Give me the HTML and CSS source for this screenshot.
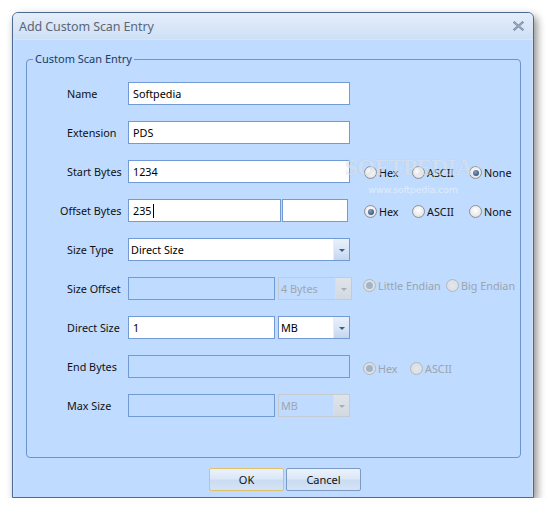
FILE: index.html
```html
<!DOCTYPE html>
<html>
<head>
<meta charset="utf-8">
<link rel="stylesheet" href="styles.css">
</head>
<body>
<div class="window">
  <div class="titlebar">
    <span class="title">Add Custom Scan Entry</span>
    <svg class="close" width="11" height="10" viewBox="0 0 11 10">
      <path d="M1.5 1.5 L9.5 8.5 M9.5 1.5 L1.5 8.5" stroke="#7a8ba5" stroke-width="2.2" stroke-linecap="square"/>
      <path d="M1.5 1.5 L9.5 8.5 M9.5 1.5 L1.5 8.5" stroke="#a9b8cc" stroke-width="0.8"/>
    </svg>
  </div>
  <div class="body">
    <fieldset class="group">
      <legend>Custom Scan Entry</legend>
      <div class="form">
        <div class="lbl">Name</div>
        <div class="field"><div class="tb w-full">Softpedia</div></div>
        <div></div>

        <div class="lbl">Extension</div>
        <div class="field"><div class="tb w-full">PDS</div></div>
        <div></div>

        <div class="lbl">Start Bytes</div>
        <div class="field"><div class="tb w-full">1234</div></div>
        <div class="radios low">
          <label class="opt o-hex"><span class="rb"></span>Hex</label>
          <label class="opt o-ascii"><span class="rb"></span>ASCII</label>
          <label class="opt"><span class="rb on"></span>None</label>
        </div>

        <div class="lbl wide">Offset Bytes</div>
        <div class="field gap1"><div class="tb w-offset">235<span class="caret"></span></div><div class="tb w-small"></div></div>
        <div class="radios low">
          <label class="opt o-hex"><span class="rb on"></span>Hex</label>
          <label class="opt o-ascii"><span class="rb"></span>ASCII</label>
          <label class="opt"><span class="rb"></span>None</label>
        </div>

        <div class="lbl">Size Type</div>
        <div class="field"><div class="cb w-full"><span class="cb-text">Direct Size</span><span class="cb-btn"><span class="tri"></span></span></div></div>
        <div></div>

        <div class="lbl">Size Offset</div>
        <div class="field gap3"><div class="tb dis w-half"></div><div class="cb dis w-combo2"><span class="cb-text">4 Bytes</span><span class="cb-btn"><span class="tri"></span></span></div></div>
        <div class="radios dis high">
          <label class="opt o-little"><span class="rb on"></span>Little Endian</label>
          <label class="opt"><span class="rb"></span>Big Endian</label>
        </div>

        <div class="lbl">Direct Size</div>
        <div class="field gap3"><div class="tb w-half">1</div><div class="cb w-combo"><span class="cb-text">MB</span><span class="cb-btn"><span class="tri"></span></span></div></div>
        <div></div>

        <div class="lbl">End Bytes</div>
        <div class="field"><div class="tb dis w-full"></div></div>
        <div class="radios dis lower">
          <label class="opt o-hex2"><span class="rb on"></span>Hex</label>
          <label class="opt"><span class="rb"></span>ASCII</label>
        </div>

        <div class="lbl">Max Size</div>
        <div class="field gap3"><div class="tb dis w-half"></div><div class="cb dis w-combo"><span class="cb-text">MB</span><span class="cb-btn"><span class="tri"></span></span></div></div>
        <div></div>
      </div>
    </fieldset>
    <div class="buttons">
      <button class="btn default">OK</button>
      <button class="btn">Cancel</button>
    </div>
  </div>
  <div class="watermark">
    <div class="wm-big">SOFTPEDIA<span class="tm">™</span></div>
    <div class="wm-small">www.softpedia.com</div>
  </div>
</div>
</body>
</html>
```

FILE: styles.css
```css
html, body {
  margin: 0;
  padding: 0;
  background: #ffffff;
}

body {
  font-family: "Noto Sans", "Open Sans", sans-serif;
  font-size: 10.8px;
  color: #000;
}

.window {
  position: relative;
  margin: 12px 0 0 12px;
  width: 522px;
  height: 486px;
  box-sizing: border-box;
  border: 1px solid #4d6a92;
  border-radius: 6px 6px 0 0;
  background: #bfdbff;
  box-shadow: 3px 4px 9px rgba(0, 0, 0, 0.45);
  display: flex;
  flex-direction: column;
}

.titlebar {
  height: 27px;
  box-sizing: border-box;
  display: flex;
  align-items: center;
  justify-content: space-between;
  padding: 0 9px 0 6px;
  border-radius: 5px 5px 0 0;
  background: linear-gradient(#e4eefb 0%, #dbe7f8 45%, #cfe0f6 100%);
  border-bottom: 1px solid #d6e5fa;
}

.title {
  font-size: 12.5px;
  color: #5a6679;
  letter-spacing: -0.1px;
}

.close {
  display: block;
}

.body {
  flex: 1;
  padding: 12px 12px 0 13px;
  border-left: 1px solid #d2e3fb;
  border-right: 1px solid #cfe0f8;
}

.group {
  margin: 0 0 0 -1px;
  width: 495px;
  box-sizing: border-box;
  padding: 0 0 40px 0;
  border: 1px solid #6b93cc;
  border-radius: 4px;
  min-width: 0;
}

.group legend {
  margin-left: 6px;
  padding: 0 2px;
  font-size: 11px;
  line-height: 14px;
  color: #1d3a5e;
}

.form {
  margin-top: 16px;
  padding-left: 40px;
  display: grid;
  grid-template-columns: 61px 235px 1fr;
  grid-auto-rows: 23px;
  row-gap: 16px;
  align-items: center;
}

.lbl {
  white-space: nowrap;
  color: #111;
}

.lbl.wide {
  margin-left: -7px;
}

.field {
  display: flex;
  height: 23px;
}

.field.gap1 { gap: 1px; }
.field.gap3 { gap: 3px; }

.tb, .cb {
  height: 23px;
  box-sizing: border-box;
  border: 1px solid #729bd6;
  background: #ffffff;
  display: flex;
  align-items: center;
  white-space: nowrap;
}

.tb {
  padding-left: 4px;
}

.tb.dis {
  background: #bfdbff;
}

.caret {
  display: inline-block;
  width: 1px;
  height: 14px;
  background: #000;
  margin-left: 1px;
}

.w-full { width: 222px; }
.w-offset { width: 153px; }
.w-small { width: 66px; }
.w-half { width: 147px; }
.w-combo { width: 72px; }
.w-combo2 { width: 74px; }

.cb {
  padding-left: 2px;
  justify-content: space-between;
}

.cb-text {
  flex: 1;
}

.cb-btn {
  width: 16px;
  height: 21px;
  box-sizing: border-box;
  border-left: 1px solid #e6eef9;
  background: linear-gradient(#e9f0fa 0%, #d9e6f6 50%, #c3d6ef 100%);
  display: flex;
  align-items: center;
  justify-content: center;
}

.tri {
  width: 0;
  height: 0;
  border-left: 3px solid transparent;
  border-right: 3px solid transparent;
  border-top: 3px solid #3d5f8c;
  margin-top: 1px;
}

.cb.dis {
  border-color: #c6cbd1;
  background: #bfdbff;
  color: #a0a6ac;
}

.cb.dis .cb-btn {
  border-left-color: #d8dee5;
  background: linear-gradient(#dfe4ea, #d2d9e1);
}

.cb.dis .tri {
  border-top-color: #a7adb4;
}

.radios {
  display: flex;
  align-items: center;
  white-space: nowrap;
}

.radios.low { margin-top: 2px; margin-left: 1px; }
.radios.high { margin-top: -6px; }
.radios.lower { margin-top: 3px; }

.opt {
  display: flex;
  align-items: center;
  gap: 2px;
  color: #111;
}

.o-hex { width: 48px; }
.o-ascii { width: 57px; }
.o-little { width: 83px; }
.o-hex2 { width: 47px; }

.rb {
  width: 13px;
  height: 13px;
  box-sizing: border-box;
  border-radius: 50%;
  border: 1px solid #8d9196;
  background: radial-gradient(circle at 50% 40%, #ffffff 0%, #eeeeee 50%, #d2d4d7 100%);
  display: flex;
  align-items: center;
  justify-content: center;
}

.rb.on::after {
  content: "";
  width: 6px;
  height: 6px;
  border-radius: 50%;
  background: radial-gradient(circle at 40% 35%, #86a2c4 0%, #3a5a82 70%);
}

.radios.dis .opt {
  color: #9da3aa;
}

.radios.dis .rb {
  border-color: #b3b7bb;
  background: radial-gradient(circle, #e4e8ec 0%, #d6dbe1 100%);
}

.radios.dis .rb.on::after {
  width: 7px;
  height: 7px;
  background: #a4b3c4;
}

.buttons {
  display: flex;
  gap: 2px;
  padding-left: 182px;
  margin-top: 10px;
}

.btn {
  width: 75px;
  height: 23px;
  box-sizing: border-box;
  margin: 0;
  padding: 0;
  font-family: "Noto Sans", "Open Sans", sans-serif;
  font-size: 11px;
  color: #111;
  border: 1px solid #7c9ac3;
  border-radius: 2px;
  background: linear-gradient(#ebf2fc 0%, #dce8f8 45%, #cadcf2 55%, #d4e4f7 100%);
}

.btn.default {
  border-color: #e1c06a;
}

.watermark {
  position: absolute;
  left: 332px;
  top: 142px;
  pointer-events: none;
  text-align: center;
}

.wm-big {
  font-family: "Liberation Serif", serif;
  font-weight: bold;
  font-size: 23px;
  letter-spacing: -0.5px;
  line-height: 26px;
  color: rgba(255, 255, 255, 0.45);
  text-shadow: 0 0 1px rgba(120, 140, 170, 0.3);
}

.tm {
  font-size: 9px;
  vertical-align: top;
  letter-spacing: 0;
}

.wm-small {
  font-family: "DejaVu Sans", sans-serif;
  font-size: 9.5px;
  margin-top: 3px;
  color: rgba(235, 242, 252, 0.75);
  letter-spacing: -0.2px;
}
```
